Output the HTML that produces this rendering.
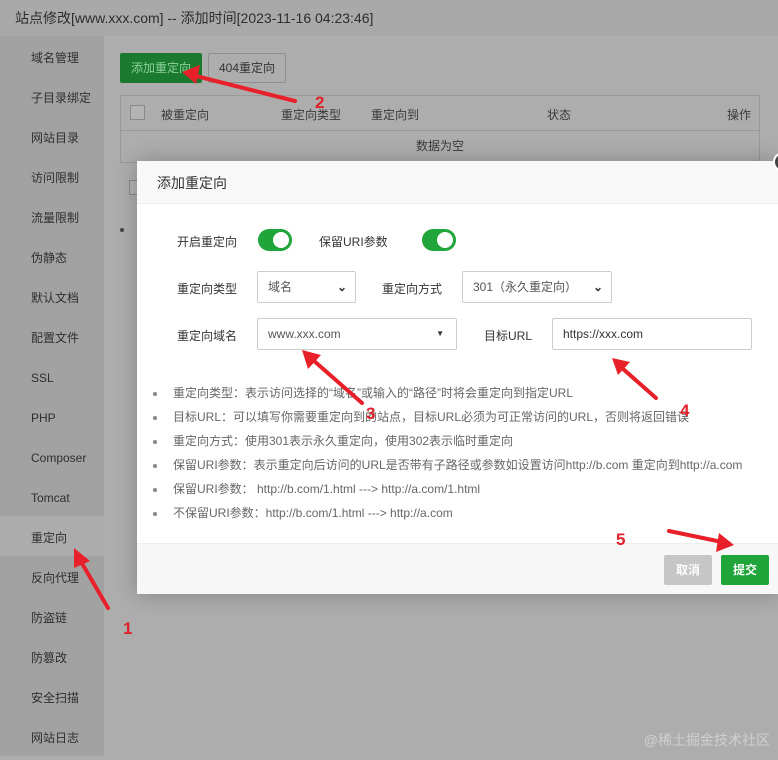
<!DOCTYPE html>
<html><head><meta charset="utf-8"><style>
*{margin:0;padding:0;box-sizing:border-box}
body{width:778px;height:756px;overflow:hidden;background:#adadad;font-family:"Liberation Sans","Noto Sans CJK SC",sans-serif;position:relative;color:#333}
.title{position:absolute;left:0;top:0;width:778px;height:36px;background:#a9a9a9;font-size:14px;line-height:36px;padding-left:15px;color:#2e2e2e}
.side{position:absolute;left:0;top:36px;width:104px;height:720px;background:#a2a2a2}
.side div{height:40px;line-height:44px;padding-left:31px;font-size:12px;color:#2f2f2f}
.side div.on{background:#acacac}
.content{position:absolute;left:104px;top:36px;width:674px;height:720px;background:#adadad}
.btn1{position:absolute;left:120px;top:53px;width:82px;height:30px;background:#1a7a30;color:#8fd29b;font-size:12px;line-height:30px;text-align:center;border-radius:2px}
.btn2{position:absolute;left:208px;top:53px;width:78px;height:30px;border:1px solid #8f8f8f;color:#333;font-size:12px;line-height:28px;text-align:center;border-radius:2px}
.tbl{position:absolute;left:120px;top:95px;width:640px;height:68px;border:1px solid #999}
.th{height:35px;border-bottom:1px solid #999;font-size:12px;color:#3a3a3a;position:relative}
.th span{position:absolute;top:10px}
.cb{position:absolute;width:15px;height:15px;border:1px solid #8a8a8a;background:#b3b3b3}
.modal{position:absolute;left:137px;top:161px;width:641px;height:433px;background:#fff;box-shadow:0 0 20px rgba(0,0,0,.25)}
.mh{height:43px;background:#f8f8f8;border-bottom:1px solid #eee;font-size:14px;line-height:44px;padding-left:20px;color:#333}
.lbl{position:absolute;font-size:12px;color:#333}
.sw{position:absolute;width:34px;height:22px;border-radius:11px;background:#20a53a}
.sw:after{content:"";position:absolute;right:3px;top:3px;width:16px;height:16px;border-radius:50%;background:#fff}
.sel{position:absolute;border:1px solid #ccc;border-radius:2px;height:32px;font-size:12px;line-height:30px;padding-left:10px;color:#555;background:#fff}
.sel b{position:absolute;right:8px;top:0;font-weight:bold;font-size:12px;color:#333}
ul{position:absolute;left:36px;top:220px;list-style:none;font-size:12px;color:#666}
ul li{height:24px;line-height:24px;position:relative;padding-left:0;white-space:nowrap}
ul li:before{content:"";position:absolute;left:-20px;top:11px;width:4px;height:4px;border-radius:50%;background:#888}
.foot{position:absolute;left:0;bottom:0;width:641px;height:51px;background:#f7f7f7;border-top:1px solid #eee}
.b{position:absolute;top:11px;height:30px;width:48px;font-size:12px;font-weight:bold;line-height:30px;text-align:center;color:#fff;border-radius:2px}
.close{position:absolute;left:773px;top:152px;width:20px;height:20px;border-radius:50%;border:2px solid #fff;background:#444}
.wm{position:absolute;right:8px;bottom:6px;font-size:14px;color:#d0d0d0}
</style></head><body>
<div class="title">站点修改[www.xxx.com] -- 添加时间[2023-11-16 04:23:46]</div>
<div class="side">
<div>域名管理</div><div>子目录绑定</div><div>网站目录</div><div>访问限制</div><div>流量限制</div><div>伪静态</div><div>默认文档</div><div>配置文件</div><div>SSL</div><div>PHP</div><div>Composer</div><div>Tomcat</div><div class="on">重定向</div><div>反向代理</div><div>防盗链</div><div>防篡改</div><div>安全扫描</div><div>网站日志</div>
</div>
<div class="content"></div>
<div class="btn1">添加重定向</div>
<div class="btn2">404重定向</div>
<div class="tbl">
<div class="th"><div class="cb" style="left:9px;top:9px"></div><span style="left:40px">被重定向</span><span style="left:160px">重定向类型</span><span style="left:250px">重定向到</span><span style="left:426px">状态</span><span style="left:606px">操作</span></div>
<div style="text-align:center;font-size:12px;color:#3a3a3a;line-height:30px">数据为空</div>
</div>
<div class="cb" style="left:129px;top:180px"></div>
<div style="position:absolute;left:120px;top:228px;width:4px;height:4px;border-radius:50%;background:#444"></div>
<div class="modal">
<div class="mh">添加重定向</div>
<div class="lbl" style="left:40px;top:72px">开启重定向</div>
<div class="sw" style="left:121px;top:68px"></div>
<div class="lbl" style="left:182px;top:72px">保留URI参数</div>
<div class="sw" style="left:285px;top:68px"></div>
<div class="lbl" style="left:40px;top:119px">重定向类型</div>
<div class="sel" style="left:120px;top:110px;width:99px">域名<b>⌄</b></div>
<div class="lbl" style="left:245px;top:119px">重定向方式</div>
<div class="sel" style="left:325px;top:110px;width:150px">301（永久重定向）<b>⌄</b></div>
<div class="lbl" style="left:40px;top:166px">重定向域名</div>
<div class="sel" style="left:120px;top:157px;width:200px">www.xxx.com<b style="font-size:8px;right:12px">▼</b></div>
<div class="lbl" style="left:347px;top:166px">目标URL</div>
<div class="sel" style="left:415px;top:157px;width:200px;color:#333">https://xxx.com</div>
<ul>
<li>重定向类型：表示访问选择的“域名”或输入的“路径”时将会重定向到指定URL</li>
<li>目标URL：可以填写你需要重定向到的站点，目标URL必须为可正常访问的URL，否则将返回错误</li>
<li>重定向方式：使用301表示永久重定向，使用302表示临时重定向</li>
<li>保留URI参数：表示重定向后访问的URL是否带有子路径或参数如设置访问http://b.com 重定向到http://a.com</li>
<li>保留URI参数： http://b.com/1.html ---&gt; http://a.com/1.html</li>
<li>不保留URI参数：http://b.com/1.html ---&gt; http://a.com</li>
</ul>
<div class="foot">
<div class="b" style="left:527px;background:#c6c6c6">取消</div>
<div class="b" style="left:584px;background:#20a53a">提交</div>
</div>
</div>
<div class="close"></div>
<svg style="position:absolute;left:0;top:0" width="778" height="756">
<g stroke="#e8202a" stroke-width="4" fill="#e8202a" stroke-linecap="round">
<line x1="295" y1="101" x2="192" y2="75"/><polygon points="182,72 200,65 196,84" stroke="none"/>
<line x1="108" y1="608" x2="80" y2="560"/><polygon points="74,548 90,561 74,568" stroke="none"/>
<line x1="362" y1="403" x2="313" y2="360"/><polygon points="302,350 321,355 308,369" stroke="none"/>
<line x1="656" y1="398" x2="622" y2="368"/><polygon points="612,358 630,362 618,375" stroke="none"/>
<line x1="669" y1="531" x2="722" y2="542"/><polygon points="734,545 716,552 719,533" stroke="none"/>
</g>
<g font-family="Liberation Sans" font-weight="bold" font-size="17" fill="#e0202a">
<text x="315" y="108">2</text><text x="123" y="634">1</text><text x="366" y="419">3</text><text x="680" y="416">4</text><text x="616" y="545">5</text>
</g>
</svg>
<div class="wm">@稀土掘金技术社区</div>
</body></html>
